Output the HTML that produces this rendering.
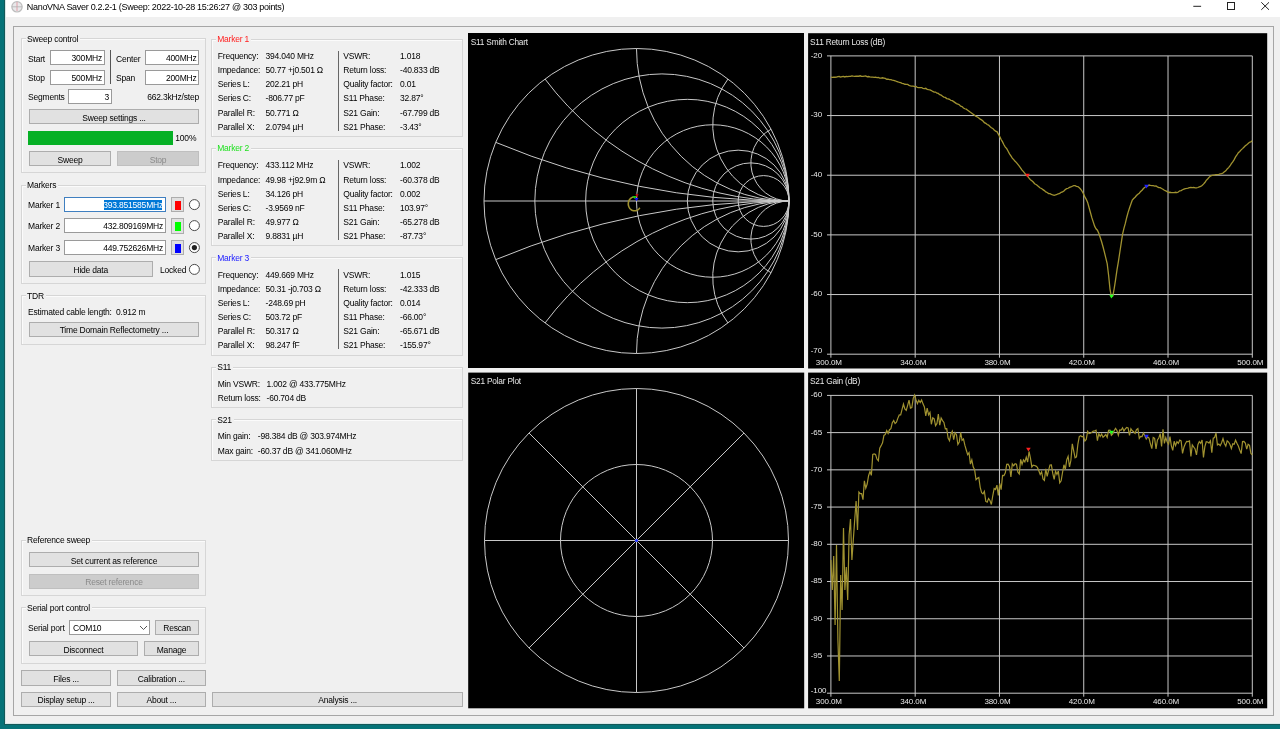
<!DOCTYPE html><html><head><meta charset="utf-8"><style>
html,body{margin:0;padding:0;width:1280px;height:729px;overflow:hidden;background:#057378;}
.r{position:absolute;}
.t{position:absolute;white-space:nowrap;line-height:12px;font-family:"Liberation Sans",sans-serif;}
svg text{font-family:"Liberation Sans",sans-serif;}
#w{position:absolute;left:0;top:0;width:1280px;height:729px;overflow:hidden;filter:blur(0.35px);}
</style></head><body><div id="w">
<div class="r" style="left:0;top:0;width:1280px;height:729px;background:#057378;"></div>
<div class="r" style="left:4.00px;top:0.00px;width:1276.00px;height:725.00px;background:#145858;"></div>
<div class="r" style="left:5.00px;top:0.00px;width:1275.00px;height:724.00px;background:#d4e8e8;"></div>
<div class="r" style="left:6.00px;top:0.00px;width:1274.00px;height:723.00px;background:#f0f0f0;"></div>
<div class="r" style="left:6.00px;top:0.00px;width:1274.00px;height:17.00px;background:#ffffff;"></div>
<svg class="r" style="left:10px;top:0px" width="14" height="14"><circle cx="7" cy="6.8" r="5.2" fill="#e8e8ea" stroke="#bcbcbc" stroke-width="1.2"/><line x1="7" y1="2" x2="7" y2="11" stroke="#e0a0a8" stroke-width="1"/><line x1="2" y1="6.8" x2="12" y2="6.8" stroke="#b0b0b0" stroke-width="0.8"/></svg>
<div class="t" style="left:26.80px;top:0.52px;font-size:9px;letter-spacing:-0.3px;color:#000;">NanoVNA Saver 0.2.2-1 (Sweep: 2022-10-28 15:26:27 @ 303 points)</div>
<svg class="r" style="left:1185px;top:0px" width="95" height="14"><line x1="8.3" y1="6.3" x2="16.1" y2="6.3" stroke="#222" stroke-width="1"/><rect x="42.5" y="2.5" width="7" height="7" fill="none" stroke="#222" stroke-width="1"/><line x1="76.3" y1="2.3" x2="84" y2="9.8" stroke="#222" stroke-width="1"/><line x1="84" y1="2.3" x2="76.3" y2="9.8" stroke="#222" stroke-width="1"/></svg>
<div class="r" style="left:13.00px;top:26.00px;width:1261.00px;height:690.00px;background:transparent;border:1px solid #a6a6a6;box-sizing:border-box;"></div>
<div class="r" style="left:21.00px;top:38.00px;width:185.00px;height:135.00px;background:transparent;border:1px solid #d6d6d6;box-sizing:border-box;box-shadow: inset 1px 1px 0 #fbfbfb;"></div>
<div class="t" style="left:26.00px;top:32.60px;height:12px;background:#f0f0f0;padding:0 2px 0 1px;font-size:8.5px;letter-spacing:-0.2px;color:#000;line-height:12px;">Sweep control</div>
<div class="t" style="left:28.00px;top:52.71px;font-size:8.5px;letter-spacing:-0.2px;color:#000;">Start</div>
<div class="r" style="left:50.30px;top:50.30px;width:54.70px;height:15.00px;background:#fff;border:1px solid #9a9a9a;box-sizing:border-box;"></div>
<div class="t" style="right:1178.00px;top:51.91px;font-size:8.5px;letter-spacing:-0.2px;color:#000;text-align:right;">300MHz</div>
<div class="t" style="left:28.00px;top:71.91px;font-size:8.5px;letter-spacing:-0.2px;color:#000;">Stop</div>
<div class="r" style="left:50.30px;top:70.30px;width:54.70px;height:14.70px;background:#fff;border:1px solid #9a9a9a;box-sizing:border-box;"></div>
<div class="t" style="right:1178.00px;top:71.76px;font-size:8.5px;letter-spacing:-0.2px;color:#000;text-align:right;">500MHz</div>
<div class="r" style="left:110.00px;top:50.00px;width:1.20px;height:34.00px;background:#555;"></div>
<div class="t" style="left:116.00px;top:52.71px;font-size:8.5px;letter-spacing:-0.2px;color:#000;">Center</div>
<div class="r" style="left:145.30px;top:50.30px;width:54.20px;height:15.00px;background:#fff;border:1px solid #9a9a9a;box-sizing:border-box;"></div>
<div class="t" style="right:1083.50px;top:51.91px;font-size:8.5px;letter-spacing:-0.2px;color:#000;text-align:right;">400MHz</div>
<div class="t" style="left:116.00px;top:71.91px;font-size:8.5px;letter-spacing:-0.2px;color:#000;">Span</div>
<div class="r" style="left:145.30px;top:70.30px;width:54.20px;height:14.70px;background:#fff;border:1px solid #9a9a9a;box-sizing:border-box;"></div>
<div class="t" style="right:1083.50px;top:71.76px;font-size:8.5px;letter-spacing:-0.2px;color:#000;text-align:right;">200MHz</div>
<div class="t" style="left:28.00px;top:91.31px;font-size:8.5px;letter-spacing:-0.2px;color:#000;">Segments</div>
<div class="r" style="left:67.80px;top:89.00px;width:44.20px;height:15.00px;background:#fff;border:1px solid #9a9a9a;box-sizing:border-box;"></div>
<div class="t" style="right:1171.00px;top:90.61px;font-size:8.5px;letter-spacing:-0.2px;color:#000;text-align:right;">3</div>
<div class="t" style="right:1081.00px;top:91.31px;font-size:8.5px;letter-spacing:-0.2px;color:#000;text-align:right;">662.3kHz/step</div>
<div class="r" style="left:29.00px;top:109.40px;width:170.00px;height:15.10px;background:#e1e1e1;border:1px solid #adadad;box-sizing:border-box;"></div>
<div class="t" style="left:14.00px;width:200px;top:111.66px;font-size:8.5px;letter-spacing:-0.2px;color:#000;text-align:center;">Sweep settings ...</div>
<div class="r" style="left:28.40px;top:130.50px;width:144.40px;height:14.50px;background:#06b025;"></div>
<div class="t" style="left:175.30px;top:132.11px;font-size:8.5px;letter-spacing:-0.2px;color:#000;">100%</div>
<div class="r" style="left:29.00px;top:151.30px;width:82.00px;height:15.10px;background:#e1e1e1;border:1px solid #adadad;box-sizing:border-box;"></div>
<div class="t" style="left:-30.00px;width:200px;top:153.56px;font-size:8.5px;letter-spacing:-0.2px;color:#000;text-align:center;">Sweep</div>
<div class="r" style="left:117.00px;top:151.30px;width:82.00px;height:15.10px;background:#cccccc;border:1px solid #bfbfbf;box-sizing:border-box;"></div>
<div class="t" style="left:58.00px;width:200px;top:153.56px;font-size:8.5px;letter-spacing:-0.2px;color:#8a8a8a;text-align:center;">Stop</div>
<div class="r" style="left:21.00px;top:184.50px;width:185.00px;height:99.50px;background:transparent;border:1px solid #d6d6d6;box-sizing:border-box;box-shadow: inset 1px 1px 0 #fbfbfb;"></div>
<div class="t" style="left:26.00px;top:179.10px;height:12px;background:#f0f0f0;padding:0 2px 0 1px;font-size:8.5px;letter-spacing:-0.2px;color:#000;line-height:12px;">Markers</div>
<div class="t" style="left:28.00px;top:198.81px;font-size:8.5px;letter-spacing:-0.2px;color:#000;">Marker 1</div>
<div class="r" style="left:64.00px;top:197.00px;width:102.00px;height:15.00px;background:#fff;border:1px solid #3f7fc0;box-sizing:border-box;"></div>
<div class="r" style="left:103.50px;top:200.00px;width:58.80px;height:9.50px;background:#0078d7;"></div>
<div class="t" style="right:1117.00px;top:198.81px;font-size:8.5px;letter-spacing:-0.2px;color:#fff;text-align:right;">393.851585MHz</div>
<div class="r" style="left:171.30px;top:197.20px;width:13.20px;height:15.30px;background:#e1e1e1;border:1px solid #adadad;box-sizing:border-box;"></div>
<div class="r" style="left:174.80px;top:200.60px;width:6.00px;height:9.20px;background:#ff0000;"></div>
<svg class="r" style="left:188px;top:198.20px" width="13" height="13"><circle cx="6.4" cy="6.6" r="5" fill="#fff" stroke="#4a4a4a" stroke-width="1"/></svg>
<div class="t" style="left:28.00px;top:219.91px;font-size:8.5px;letter-spacing:-0.2px;color:#000;">Marker 2</div>
<div class="r" style="left:64.20px;top:218.30px;width:101.80px;height:14.70px;background:#fff;border:1px solid #9a9a9a;box-sizing:border-box;"></div>
<div class="t" style="right:1117.00px;top:219.76px;font-size:8.5px;letter-spacing:-0.2px;color:#000;text-align:right;">432.809169MHz</div>
<div class="r" style="left:171.30px;top:218.30px;width:13.20px;height:15.30px;background:#e1e1e1;border:1px solid #adadad;box-sizing:border-box;"></div>
<div class="r" style="left:174.80px;top:221.70px;width:6.00px;height:9.20px;background:#00ff00;"></div>
<svg class="r" style="left:188px;top:219.30px" width="13" height="13"><circle cx="6.4" cy="6.6" r="5" fill="#fff" stroke="#4a4a4a" stroke-width="1"/></svg>
<div class="t" style="left:28.00px;top:241.81px;font-size:8.5px;letter-spacing:-0.2px;color:#000;">Marker 3</div>
<div class="r" style="left:64.20px;top:240.20px;width:101.80px;height:14.70px;background:#fff;border:1px solid #9a9a9a;box-sizing:border-box;"></div>
<div class="t" style="right:1117.00px;top:241.66px;font-size:8.5px;letter-spacing:-0.2px;color:#000;text-align:right;">449.752626MHz</div>
<div class="r" style="left:171.30px;top:240.20px;width:13.20px;height:15.30px;background:#e1e1e1;border:1px solid #adadad;box-sizing:border-box;"></div>
<div class="r" style="left:174.80px;top:243.60px;width:6.00px;height:9.20px;background:#0000ff;"></div>
<svg class="r" style="left:188px;top:241.20px" width="13" height="13"><circle cx="6.4" cy="6.6" r="5" fill="#fff" stroke="#4a4a4a" stroke-width="1"/><circle cx="6.4" cy="6.6" r="2.6" fill="#222"/></svg>
<div class="r" style="left:29.00px;top:261.30px;width:123.50px;height:15.70px;background:#e1e1e1;border:1px solid #adadad;box-sizing:border-box;"></div>
<div class="t" style="left:-9.25px;width:200px;top:263.86px;font-size:8.5px;letter-spacing:-0.2px;color:#000;text-align:center;">Hide data</div>
<div class="t" style="left:160.00px;top:263.51px;font-size:8.5px;letter-spacing:-0.2px;color:#000;">Locked</div>
<svg class="r" style="left:188px;top:263px" width="13" height="13"><circle cx="6.4" cy="6.4" r="5" fill="#fff" stroke="#4a4a4a" stroke-width="1"/></svg>
<div class="r" style="left:21.00px;top:295.00px;width:185.00px;height:49.50px;background:transparent;border:1px solid #d6d6d6;box-sizing:border-box;box-shadow: inset 1px 1px 0 #fbfbfb;"></div>
<div class="t" style="left:26.00px;top:289.60px;height:12px;background:#f0f0f0;padding:0 2px 0 1px;font-size:8.5px;letter-spacing:-0.2px;color:#000;line-height:12px;">TDR</div>
<div class="t" style="left:28.00px;top:306.11px;font-size:8.5px;letter-spacing:-0.2px;color:#000;">Estimated cable length:&nbsp; 0.912 m</div>
<div class="r" style="left:29.00px;top:322.30px;width:170.00px;height:14.70px;background:#e1e1e1;border:1px solid #adadad;box-sizing:border-box;"></div>
<div class="t" style="left:14.00px;width:200px;top:324.36px;font-size:8.5px;letter-spacing:-0.2px;color:#000;text-align:center;">Time Domain Reflectometry ...</div>
<div class="r" style="left:21.00px;top:539.70px;width:185.00px;height:56.80px;background:transparent;border:1px solid #d6d6d6;box-sizing:border-box;box-shadow: inset 1px 1px 0 #fbfbfb;"></div>
<div class="t" style="left:26.00px;top:534.30px;height:12px;background:#f0f0f0;padding:0 2px 0 1px;font-size:8.5px;letter-spacing:-0.2px;color:#000;line-height:12px;">Reference sweep</div>
<div class="r" style="left:29.00px;top:552.20px;width:170.00px;height:15.30px;background:#e1e1e1;border:1px solid #adadad;box-sizing:border-box;"></div>
<div class="t" style="left:14.00px;width:200px;top:554.56px;font-size:8.5px;letter-spacing:-0.2px;color:#000;text-align:center;">Set current as reference</div>
<div class="r" style="left:29.00px;top:574.00px;width:170.00px;height:15.00px;background:#cccccc;border:1px solid #bfbfbf;box-sizing:border-box;"></div>
<div class="t" style="left:14.00px;width:200px;top:576.21px;font-size:8.5px;letter-spacing:-0.2px;color:#8a8a8a;text-align:center;">Reset reference</div>
<div class="r" style="left:21.00px;top:607.00px;width:185.00px;height:57.00px;background:transparent;border:1px solid #d6d6d6;box-sizing:border-box;box-shadow: inset 1px 1px 0 #fbfbfb;"></div>
<div class="t" style="left:26.00px;top:601.60px;height:12px;background:#f0f0f0;padding:0 2px 0 1px;font-size:8.5px;letter-spacing:-0.2px;color:#000;line-height:12px;">Serial port control</div>
<div class="t" style="left:28.00px;top:622.11px;font-size:8.5px;letter-spacing:-0.2px;color:#000;">Serial port</div>
<div class="r" style="left:69.40px;top:620.20px;width:80.60px;height:14.40px;background:#fff;border:1px solid #9a9a9a;box-sizing:border-box;"></div>
<div class="t" style="left:73.00px;top:621.51px;font-size:8.5px;letter-spacing:-0.2px;color:#000;">COM10</div>
<svg class="r" style="left:138.5px;top:624.3px" width="10" height="8"><polyline points="1,2 4.5,5.5 8,2" fill="none" stroke="#555" stroke-width="1"/></svg>
<div class="r" style="left:155.30px;top:620.20px;width:43.50px;height:14.80px;background:#e1e1e1;border:1px solid #adadad;box-sizing:border-box;"></div>
<div class="t" style="left:77.05px;width:200px;top:622.31px;font-size:8.5px;letter-spacing:-0.2px;color:#000;text-align:center;">Rescan</div>
<div class="r" style="left:29.00px;top:641.30px;width:109.00px;height:15.20px;background:#e1e1e1;border:1px solid #adadad;box-sizing:border-box;"></div>
<div class="t" style="left:-16.50px;width:200px;top:643.61px;font-size:8.5px;letter-spacing:-0.2px;color:#000;text-align:center;">Disconnect</div>
<div class="r" style="left:144.00px;top:641.30px;width:55.00px;height:15.20px;background:#e1e1e1;border:1px solid #adadad;box-sizing:border-box;"></div>
<div class="t" style="left:71.50px;width:200px;top:643.61px;font-size:8.5px;letter-spacing:-0.2px;color:#000;text-align:center;">Manage</div>
<div class="r" style="left:21.30px;top:670.20px;width:89.50px;height:15.60px;background:#e1e1e1;border:1px solid #adadad;box-sizing:border-box;"></div>
<div class="t" style="left:-33.95px;width:200px;top:672.71px;font-size:8.5px;letter-spacing:-0.2px;color:#000;text-align:center;">Files ...</div>
<div class="r" style="left:117.00px;top:670.20px;width:88.80px;height:15.60px;background:#e1e1e1;border:1px solid #adadad;box-sizing:border-box;"></div>
<div class="t" style="left:61.40px;width:200px;top:672.71px;font-size:8.5px;letter-spacing:-0.2px;color:#000;text-align:center;">Calibration ...</div>
<div class="r" style="left:21.30px;top:692.00px;width:89.50px;height:15.20px;background:#e1e1e1;border:1px solid #adadad;box-sizing:border-box;"></div>
<div class="t" style="left:-33.95px;width:200px;top:694.31px;font-size:8.5px;letter-spacing:-0.2px;color:#000;text-align:center;">Display setup ...</div>
<div class="r" style="left:117.00px;top:692.00px;width:88.80px;height:15.20px;background:#e1e1e1;border:1px solid #adadad;box-sizing:border-box;"></div>
<div class="t" style="left:61.40px;width:200px;top:694.31px;font-size:8.5px;letter-spacing:-0.2px;color:#000;text-align:center;">About ...</div>
<div class="r" style="left:212.30px;top:692.00px;width:250.80px;height:15.20px;background:#e1e1e1;border:1px solid #adadad;box-sizing:border-box;"></div>
<div class="t" style="left:237.70px;width:200px;top:694.31px;font-size:8.5px;letter-spacing:-0.2px;color:#000;text-align:center;">Analysis ...</div>
<div class="r" style="left:211.20px;top:38.50px;width:252.30px;height:98.30px;background:transparent;border:1px solid #d6d6d6;box-sizing:border-box;box-shadow: inset 1px 1px 0 #fbfbfb;"></div>
<div class="t" style="left:216.20px;top:33.10px;height:12px;background:#f0f0f0;padding:0 2px 0 1px;font-size:8.5px;letter-spacing:-0.2px;color:#ff2020;line-height:12px;">Marker 1</div>
<div class="t" style="left:217.80px;top:50.11px;font-size:8.5px;letter-spacing:-0.2px;color:#000;">Frequency:</div>
<div class="t" style="left:265.50px;top:50.11px;font-size:8.5px;letter-spacing:-0.2px;color:#000;">394.040 MHz</div>
<div class="t" style="left:343.30px;top:50.11px;font-size:8.5px;letter-spacing:-0.2px;color:#000;">VSWR:</div>
<div class="t" style="left:400.00px;top:50.11px;font-size:8.5px;letter-spacing:-0.2px;color:#000;">1.018</div>
<div class="t" style="left:217.80px;top:64.21px;font-size:8.5px;letter-spacing:-0.2px;color:#000;">Impedance:</div>
<div class="t" style="left:265.50px;top:64.21px;font-size:8.5px;letter-spacing:-0.2px;color:#000;">50.77 +j0.501 &Omega;</div>
<div class="t" style="left:343.30px;top:64.21px;font-size:8.5px;letter-spacing:-0.2px;color:#000;">Return loss:</div>
<div class="t" style="left:400.00px;top:64.21px;font-size:8.5px;letter-spacing:-0.2px;color:#000;">-40.833 dB</div>
<div class="t" style="left:217.80px;top:78.31px;font-size:8.5px;letter-spacing:-0.2px;color:#000;">Series L:</div>
<div class="t" style="left:265.50px;top:78.31px;font-size:8.5px;letter-spacing:-0.2px;color:#000;">202.21 pH</div>
<div class="t" style="left:343.30px;top:78.31px;font-size:8.5px;letter-spacing:-0.2px;color:#000;">Quality factor:</div>
<div class="t" style="left:400.00px;top:78.31px;font-size:8.5px;letter-spacing:-0.2px;color:#000;">0.01</div>
<div class="t" style="left:217.80px;top:92.41px;font-size:8.5px;letter-spacing:-0.2px;color:#000;">Series C:</div>
<div class="t" style="left:265.50px;top:92.41px;font-size:8.5px;letter-spacing:-0.2px;color:#000;">-806.77 pF</div>
<div class="t" style="left:343.30px;top:92.41px;font-size:8.5px;letter-spacing:-0.2px;color:#000;">S11 Phase:</div>
<div class="t" style="left:400.00px;top:92.41px;font-size:8.5px;letter-spacing:-0.2px;color:#000;">32.87&deg;</div>
<div class="t" style="left:217.80px;top:106.51px;font-size:8.5px;letter-spacing:-0.2px;color:#000;">Parallel R:</div>
<div class="t" style="left:265.50px;top:106.51px;font-size:8.5px;letter-spacing:-0.2px;color:#000;">50.771 &Omega;</div>
<div class="t" style="left:343.30px;top:106.51px;font-size:8.5px;letter-spacing:-0.2px;color:#000;">S21 Gain:</div>
<div class="t" style="left:400.00px;top:106.51px;font-size:8.5px;letter-spacing:-0.2px;color:#000;">-67.799 dB</div>
<div class="t" style="left:217.80px;top:120.61px;font-size:8.5px;letter-spacing:-0.2px;color:#000;">Parallel X:</div>
<div class="t" style="left:265.50px;top:120.61px;font-size:8.5px;letter-spacing:-0.2px;color:#000;">2.0794 &micro;H</div>
<div class="t" style="left:343.30px;top:120.61px;font-size:8.5px;letter-spacing:-0.2px;color:#000;">S21 Phase:</div>
<div class="t" style="left:400.00px;top:120.61px;font-size:8.5px;letter-spacing:-0.2px;color:#000;">-3.43&deg;</div>
<div class="r" style="left:337.50px;top:50.90px;width:1.20px;height:79.70px;background:#666;"></div>
<div class="r" style="left:211.20px;top:147.80px;width:252.30px;height:98.60px;background:transparent;border:1px solid #d6d6d6;box-sizing:border-box;box-shadow: inset 1px 1px 0 #fbfbfb;"></div>
<div class="t" style="left:216.20px;top:142.40px;height:12px;background:#f0f0f0;padding:0 2px 0 1px;font-size:8.5px;letter-spacing:-0.2px;color:#20e020;line-height:12px;">Marker 2</div>
<div class="t" style="left:217.80px;top:159.41px;font-size:8.5px;letter-spacing:-0.2px;color:#000;">Frequency:</div>
<div class="t" style="left:265.50px;top:159.41px;font-size:8.5px;letter-spacing:-0.2px;color:#000;">433.112 MHz</div>
<div class="t" style="left:343.30px;top:159.41px;font-size:8.5px;letter-spacing:-0.2px;color:#000;">VSWR:</div>
<div class="t" style="left:400.00px;top:159.41px;font-size:8.5px;letter-spacing:-0.2px;color:#000;">1.002</div>
<div class="t" style="left:217.80px;top:173.51px;font-size:8.5px;letter-spacing:-0.2px;color:#000;">Impedance:</div>
<div class="t" style="left:265.50px;top:173.51px;font-size:8.5px;letter-spacing:-0.2px;color:#000;">49.98 +j92.9m &Omega;</div>
<div class="t" style="left:343.30px;top:173.51px;font-size:8.5px;letter-spacing:-0.2px;color:#000;">Return loss:</div>
<div class="t" style="left:400.00px;top:173.51px;font-size:8.5px;letter-spacing:-0.2px;color:#000;">-60.378 dB</div>
<div class="t" style="left:217.80px;top:187.61px;font-size:8.5px;letter-spacing:-0.2px;color:#000;">Series L:</div>
<div class="t" style="left:265.50px;top:187.61px;font-size:8.5px;letter-spacing:-0.2px;color:#000;">34.126 pH</div>
<div class="t" style="left:343.30px;top:187.61px;font-size:8.5px;letter-spacing:-0.2px;color:#000;">Quality factor:</div>
<div class="t" style="left:400.00px;top:187.61px;font-size:8.5px;letter-spacing:-0.2px;color:#000;">0.002</div>
<div class="t" style="left:217.80px;top:201.71px;font-size:8.5px;letter-spacing:-0.2px;color:#000;">Series C:</div>
<div class="t" style="left:265.50px;top:201.71px;font-size:8.5px;letter-spacing:-0.2px;color:#000;">-3.9569 nF</div>
<div class="t" style="left:343.30px;top:201.71px;font-size:8.5px;letter-spacing:-0.2px;color:#000;">S11 Phase:</div>
<div class="t" style="left:400.00px;top:201.71px;font-size:8.5px;letter-spacing:-0.2px;color:#000;">103.97&deg;</div>
<div class="t" style="left:217.80px;top:215.81px;font-size:8.5px;letter-spacing:-0.2px;color:#000;">Parallel R:</div>
<div class="t" style="left:265.50px;top:215.81px;font-size:8.5px;letter-spacing:-0.2px;color:#000;">49.977 &Omega;</div>
<div class="t" style="left:343.30px;top:215.81px;font-size:8.5px;letter-spacing:-0.2px;color:#000;">S21 Gain:</div>
<div class="t" style="left:400.00px;top:215.81px;font-size:8.5px;letter-spacing:-0.2px;color:#000;">-65.278 dB</div>
<div class="t" style="left:217.80px;top:229.91px;font-size:8.5px;letter-spacing:-0.2px;color:#000;">Parallel X:</div>
<div class="t" style="left:265.50px;top:229.91px;font-size:8.5px;letter-spacing:-0.2px;color:#000;">9.8831 &micro;H</div>
<div class="t" style="left:343.30px;top:229.91px;font-size:8.5px;letter-spacing:-0.2px;color:#000;">S21 Phase:</div>
<div class="t" style="left:400.00px;top:229.91px;font-size:8.5px;letter-spacing:-0.2px;color:#000;">-87.73&deg;</div>
<div class="r" style="left:337.50px;top:160.20px;width:1.20px;height:79.70px;background:#666;"></div>
<div class="r" style="left:211.20px;top:257.00px;width:252.30px;height:98.80px;background:transparent;border:1px solid #d6d6d6;box-sizing:border-box;box-shadow: inset 1px 1px 0 #fbfbfb;"></div>
<div class="t" style="left:216.20px;top:251.60px;height:12px;background:#f0f0f0;padding:0 2px 0 1px;font-size:8.5px;letter-spacing:-0.2px;color:#2020ff;line-height:12px;">Marker 3</div>
<div class="t" style="left:217.80px;top:268.61px;font-size:8.5px;letter-spacing:-0.2px;color:#000;">Frequency:</div>
<div class="t" style="left:265.50px;top:268.61px;font-size:8.5px;letter-spacing:-0.2px;color:#000;">449.669 MHz</div>
<div class="t" style="left:343.30px;top:268.61px;font-size:8.5px;letter-spacing:-0.2px;color:#000;">VSWR:</div>
<div class="t" style="left:400.00px;top:268.61px;font-size:8.5px;letter-spacing:-0.2px;color:#000;">1.015</div>
<div class="t" style="left:217.80px;top:282.71px;font-size:8.5px;letter-spacing:-0.2px;color:#000;">Impedance:</div>
<div class="t" style="left:265.50px;top:282.71px;font-size:8.5px;letter-spacing:-0.2px;color:#000;">50.31 -j0.703 &Omega;</div>
<div class="t" style="left:343.30px;top:282.71px;font-size:8.5px;letter-spacing:-0.2px;color:#000;">Return loss:</div>
<div class="t" style="left:400.00px;top:282.71px;font-size:8.5px;letter-spacing:-0.2px;color:#000;">-42.333 dB</div>
<div class="t" style="left:217.80px;top:296.81px;font-size:8.5px;letter-spacing:-0.2px;color:#000;">Series L:</div>
<div class="t" style="left:265.50px;top:296.81px;font-size:8.5px;letter-spacing:-0.2px;color:#000;">-248.69 pH</div>
<div class="t" style="left:343.30px;top:296.81px;font-size:8.5px;letter-spacing:-0.2px;color:#000;">Quality factor:</div>
<div class="t" style="left:400.00px;top:296.81px;font-size:8.5px;letter-spacing:-0.2px;color:#000;">0.014</div>
<div class="t" style="left:217.80px;top:310.91px;font-size:8.5px;letter-spacing:-0.2px;color:#000;">Series C:</div>
<div class="t" style="left:265.50px;top:310.91px;font-size:8.5px;letter-spacing:-0.2px;color:#000;">503.72 pF</div>
<div class="t" style="left:343.30px;top:310.91px;font-size:8.5px;letter-spacing:-0.2px;color:#000;">S11 Phase:</div>
<div class="t" style="left:400.00px;top:310.91px;font-size:8.5px;letter-spacing:-0.2px;color:#000;">-66.00&deg;</div>
<div class="t" style="left:217.80px;top:325.01px;font-size:8.5px;letter-spacing:-0.2px;color:#000;">Parallel R:</div>
<div class="t" style="left:265.50px;top:325.01px;font-size:8.5px;letter-spacing:-0.2px;color:#000;">50.317 &Omega;</div>
<div class="t" style="left:343.30px;top:325.01px;font-size:8.5px;letter-spacing:-0.2px;color:#000;">S21 Gain:</div>
<div class="t" style="left:400.00px;top:325.01px;font-size:8.5px;letter-spacing:-0.2px;color:#000;">-65.671 dB</div>
<div class="t" style="left:217.80px;top:339.11px;font-size:8.5px;letter-spacing:-0.2px;color:#000;">Parallel X:</div>
<div class="t" style="left:265.50px;top:339.11px;font-size:8.5px;letter-spacing:-0.2px;color:#000;">98.247 fF</div>
<div class="t" style="left:343.30px;top:339.11px;font-size:8.5px;letter-spacing:-0.2px;color:#000;">S21 Phase:</div>
<div class="t" style="left:400.00px;top:339.11px;font-size:8.5px;letter-spacing:-0.2px;color:#000;">-155.97&deg;</div>
<div class="r" style="left:337.50px;top:269.40px;width:1.20px;height:79.70px;background:#666;"></div>
<div class="r" style="left:211.20px;top:366.60px;width:252.30px;height:41.80px;background:transparent;border:1px solid #d6d6d6;box-sizing:border-box;box-shadow: inset 1px 1px 0 #fbfbfb;"></div>
<div class="t" style="left:216.20px;top:361.20px;height:12px;background:#f0f0f0;padding:0 2px 0 1px;font-size:8.5px;letter-spacing:-0.2px;color:#000;line-height:12px;">S11</div>
<div class="t" style="left:217.80px;top:377.61px;font-size:8.5px;letter-spacing:-0.2px;color:#000;">Min VSWR:</div>
<div class="t" style="left:266.50px;top:377.61px;font-size:8.5px;letter-spacing:-0.2px;color:#000;">1.002 @ 433.775MHz</div>
<div class="t" style="left:217.80px;top:391.71px;font-size:8.5px;letter-spacing:-0.2px;color:#000;">Return loss:</div>
<div class="t" style="left:266.50px;top:391.71px;font-size:8.5px;letter-spacing:-0.2px;color:#000;">-60.704 dB</div>
<div class="r" style="left:211.20px;top:419.00px;width:252.30px;height:41.80px;background:transparent;border:1px solid #d6d6d6;box-sizing:border-box;box-shadow: inset 1px 1px 0 #fbfbfb;"></div>
<div class="t" style="left:216.20px;top:413.60px;height:12px;background:#f0f0f0;padding:0 2px 0 1px;font-size:8.5px;letter-spacing:-0.2px;color:#000;line-height:12px;">S21</div>
<div class="t" style="left:217.80px;top:430.11px;font-size:8.5px;letter-spacing:-0.2px;color:#000;">Min gain:</div>
<div class="t" style="left:257.80px;top:430.11px;font-size:8.5px;letter-spacing:-0.2px;color:#000;">-98.384 dB @ 303.974MHz</div>
<div class="t" style="left:217.80px;top:444.51px;font-size:8.5px;letter-spacing:-0.2px;color:#000;">Max gain:</div>
<div class="t" style="left:257.80px;top:444.51px;font-size:8.5px;letter-spacing:-0.2px;color:#000;">-60.37 dB @ 341.060MHz</div>
<div class="r" style="left:468.20px;top:33.20px;width:336.00px;height:335.30px;background:#000;"></div>
<div class="t" style="left:470.70px;top:35.91px;font-size:8.3px;letter-spacing:-0.2px;color:#e8e8e8;">S11 Smith Chart</div>
<svg class="r" style="left:0;top:0" width="1280" height="729" viewBox="0 0 1280 729">
<circle cx="636.5" cy="201.0" r="152.5" fill="none" stroke="#c8c8c8" stroke-width="1"/>
<line x1="484.0" y1="201.0" x2="789.0" y2="201.0" fill="none" stroke="#c8c8c8" stroke-width="1"/>
<circle cx="712.75" cy="201.0" r="76.25" fill="none" stroke="#c8c8c8" stroke-width="1"/>
<circle cx="738.17" cy="201.0" r="50.83" fill="none" stroke="#c8c8c8" stroke-width="1"/>
<circle cx="750.88" cy="201.0" r="38.12" fill="none" stroke="#c8c8c8" stroke-width="1"/>
<circle cx="763.58" cy="201.0" r="25.42" fill="none" stroke="#c8c8c8" stroke-width="1"/>
<circle cx="687.33" cy="201.0" r="101.67" fill="none" stroke="#c8c8c8" stroke-width="1"/>
<circle cx="661.92" cy="201.0" r="127.08" fill="none" stroke="#c8c8c8" stroke-width="1"/>
<path d="M789.00,201.0 A38.12,38.12 0 0 1 771.06,129.24" fill="none" stroke="#c8c8c8" stroke-width="1"/>
<path d="M789.00,201.0 A38.12,38.12 0 0 0 771.06,272.76" fill="none" stroke="#c8c8c8" stroke-width="1"/>
<path d="M789.00,201.0 A76.25,76.25 0 0 1 728.00,79.00" fill="none" stroke="#c8c8c8" stroke-width="1"/>
<path d="M789.00,201.0 A76.25,76.25 0 0 0 728.00,323.00" fill="none" stroke="#c8c8c8" stroke-width="1"/>
<path d="M789.00,201.0 A152.50,152.50 0 0 1 636.50,48.50" fill="none" stroke="#c8c8c8" stroke-width="1"/>
<path d="M789.00,201.0 A152.50,152.50 0 0 0 636.50,353.50" fill="none" stroke="#c8c8c8" stroke-width="1"/>
<path d="M789.00,201.0 A305.00,305.00 0 0 1 545.00,79.00" fill="none" stroke="#c8c8c8" stroke-width="1"/>
<path d="M789.00,201.0 A305.00,305.00 0 0 0 545.00,323.00" fill="none" stroke="#c8c8c8" stroke-width="1"/>
<path d="M789.00,201.0 A762.50,762.50 0 0 1 495.73,142.35" fill="none" stroke="#c8c8c8" stroke-width="1"/>
<path d="M789.00,201.0 A762.50,762.50 0 0 0 495.73,259.65" fill="none" stroke="#c8c8c8" stroke-width="1"/>
<polyline points="639.76,207.82 639.49,208.22 639.18,208.60 638.86,208.96 638.51,209.29 638.14,209.59 637.76,209.86 637.36,210.10 636.94,210.30 636.51,210.47 636.07,210.61 635.62,210.71 635.17,210.77 634.71,210.80 634.26,210.79 633.80,210.74 633.35,210.66 632.91,210.54 632.47,210.39 632.05,210.20 631.64,209.98 631.24,209.72 630.87,209.44 630.51,209.12 630.17,208.78 629.86,208.41 629.57,208.02 629.31,207.60 629.08,207.16 628.87,206.71 628.70,206.24 628.55,205.76 628.44,205.27 628.36,204.77 628.31,204.27 628.30,203.76 628.32,203.25 628.37,202.75 628.46,202.25 628.57,201.76 628.72,201.28 628.90,200.81 629.11,200.36 629.35,199.93 629.62,199.52 629.91,199.13 630.22,198.76 630.56,198.42 630.93,198.11 631.31,197.83 631.70,197.58 632.12,197.37 632.54,197.18 632.98,197.04 633.42,196.92 633.87,196.85 634.33,196.81 634.79,196.80 635.24,196.84 635.69,196.91" fill="none" stroke="#a09230" stroke-width="1.6"/>
<polygon points="635.3,194.2 638.7,194.2 637,197.4" fill="#c00000"/>
<polygon points="632.5,196 636.5,196 634.5,199" fill="#10d010"/>
<polygon points="634.5,198 638.5,198 636.5,201.2" fill="#1010ff"/>
<rect x="468.2" y="372.6" width="336.00000000000006" height="335.69999999999993" fill="#000"/>
<circle cx="636.5" cy="540.5" r="152" fill="none" stroke="#c8c8c8" stroke-width="1"/>
<circle cx="636.5" cy="540.5" r="76.0" fill="none" stroke="#c8c8c8" stroke-width="1"/>
<line x1="484.5" y1="540.5" x2="788.5" y2="540.5" fill="none" stroke="#c8c8c8" stroke-width="1"/>
<line x1="636.5" y1="388.5" x2="636.5" y2="692.5" fill="none" stroke="#c8c8c8" stroke-width="1"/>
<line x1="529.02" y1="433.02" x2="743.98" y2="647.98" fill="none" stroke="#c8c8c8" stroke-width="1"/>
<line x1="529.02" y1="647.98" x2="743.98" y2="433.02" fill="none" stroke="#c8c8c8" stroke-width="1"/>
<circle cx="636.5" cy="540.5" r="1.6" fill="#2030ff"/>
<rect x="808.1" y="33.2" width="459.1" height="335.3" fill="#000"/>
<rect x="808.1" y="372.6" width="459.1" height="335.69999999999993" fill="#000"/>
<line x1="827" y1="55.90" x2="1252.3" y2="55.90" fill="none" stroke="#c8c8c8" stroke-width="1"/>
<line x1="827" y1="115.56" x2="1252.3" y2="115.56" fill="none" stroke="#c8c8c8" stroke-width="1"/>
<line x1="827" y1="175.22" x2="1252.3" y2="175.22" fill="none" stroke="#c8c8c8" stroke-width="1"/>
<line x1="827" y1="234.88" x2="1252.3" y2="234.88" fill="none" stroke="#c8c8c8" stroke-width="1"/>
<line x1="827" y1="294.54" x2="1252.3" y2="294.54" fill="none" stroke="#c8c8c8" stroke-width="1"/>
<line x1="827" y1="354.20" x2="1252.3" y2="354.20" fill="none" stroke="#c8c8c8" stroke-width="1"/>
<line x1="830.90" y1="55.9" x2="830.90" y2="357.70" fill="none" stroke="#c8c8c8" stroke-width="1"/>
<line x1="915.18" y1="55.9" x2="915.18" y2="357.70" fill="none" stroke="#c8c8c8" stroke-width="1"/>
<line x1="999.46" y1="55.9" x2="999.46" y2="357.70" fill="none" stroke="#c8c8c8" stroke-width="1"/>
<line x1="1083.74" y1="55.9" x2="1083.74" y2="357.70" fill="none" stroke="#c8c8c8" stroke-width="1"/>
<line x1="1168.02" y1="55.9" x2="1168.02" y2="357.70" fill="none" stroke="#c8c8c8" stroke-width="1"/>
<line x1="1252.30" y1="55.9" x2="1252.30" y2="357.70" fill="none" stroke="#c8c8c8" stroke-width="1"/>
<line x1="827" y1="395.40" x2="1252.3" y2="395.40" fill="none" stroke="#c8c8c8" stroke-width="1"/>
<line x1="827" y1="432.62" x2="1252.3" y2="432.62" fill="none" stroke="#c8c8c8" stroke-width="1"/>
<line x1="827" y1="469.85" x2="1252.3" y2="469.85" fill="none" stroke="#c8c8c8" stroke-width="1"/>
<line x1="827" y1="507.07" x2="1252.3" y2="507.07" fill="none" stroke="#c8c8c8" stroke-width="1"/>
<line x1="827" y1="544.30" x2="1252.3" y2="544.30" fill="none" stroke="#c8c8c8" stroke-width="1"/>
<line x1="827" y1="581.53" x2="1252.3" y2="581.53" fill="none" stroke="#c8c8c8" stroke-width="1"/>
<line x1="827" y1="618.75" x2="1252.3" y2="618.75" fill="none" stroke="#c8c8c8" stroke-width="1"/>
<line x1="827" y1="655.98" x2="1252.3" y2="655.98" fill="none" stroke="#c8c8c8" stroke-width="1"/>
<line x1="827" y1="693.20" x2="1252.3" y2="693.20" fill="none" stroke="#c8c8c8" stroke-width="1"/>
<line x1="830.90" y1="395.4" x2="830.90" y2="696.70" fill="none" stroke="#c8c8c8" stroke-width="1"/>
<line x1="915.18" y1="395.4" x2="915.18" y2="696.70" fill="none" stroke="#c8c8c8" stroke-width="1"/>
<line x1="999.46" y1="395.4" x2="999.46" y2="696.70" fill="none" stroke="#c8c8c8" stroke-width="1"/>
<line x1="1083.74" y1="395.4" x2="1083.74" y2="696.70" fill="none" stroke="#c8c8c8" stroke-width="1"/>
<line x1="1168.02" y1="395.4" x2="1168.02" y2="696.70" fill="none" stroke="#c8c8c8" stroke-width="1"/>
<line x1="1252.30" y1="395.4" x2="1252.30" y2="696.70" fill="none" stroke="#c8c8c8" stroke-width="1"/>
<polyline points="830.90,77.09 832.30,77.30 833.69,77.11 835.09,77.23 836.48,77.18 837.88,76.65 839.27,76.53 840.67,77.09 842.06,76.54 843.46,76.43 844.85,76.94 846.25,76.43 847.64,76.64 849.04,76.28 850.44,76.34 851.83,75.89 853.23,76.23 854.62,76.38 856.02,76.09 857.41,76.26 858.81,76.23 860.20,75.78 861.60,76.38 862.99,76.30 864.39,76.13 865.78,75.99 867.18,76.74 868.57,76.51 869.97,76.81 871.37,77.05 872.76,77.04 874.16,77.35 875.55,77.07 876.95,77.56 878.34,77.45 879.74,78.03 881.13,78.19 882.53,77.79 883.92,78.05 885.32,78.37 886.71,79.23 888.11,79.08 889.51,79.54 890.90,79.61 892.30,80.13 893.69,80.40 895.09,80.77 896.48,81.36 897.88,81.78 899.27,82.46 900.67,82.71 902.06,83.34 903.46,83.71 904.85,84.25 906.25,84.41 907.65,84.41 909.04,85.36 910.44,85.82 911.83,86.12 913.23,86.18 914.62,86.60 916.02,86.48 917.41,87.48 918.81,87.60 920.20,87.57 921.60,87.55 922.99,88.33 924.39,88.64 925.78,88.25 927.18,89.31 928.58,89.68 929.97,89.92 931.37,90.54 932.76,91.46 934.16,92.13 935.55,92.09 936.95,93.20 938.34,93.42 939.74,94.67 941.13,95.08 942.53,96.25 943.92,97.08 945.32,97.44 946.72,98.59 948.11,98.78 949.51,99.33 950.90,100.48 952.30,100.73 953.69,101.62 955.09,102.62 956.48,103.61 957.88,104.05 959.27,104.77 960.67,106.24 962.06,106.61 963.46,107.95 964.85,108.75 966.25,109.21 967.65,110.17 969.04,111.16 970.44,112.24 971.83,113.23 973.23,114.22 974.62,115.17 976.02,116.37 977.41,117.00 978.81,117.94 980.20,119.20 981.60,119.87 982.99,120.99 984.39,122.61 985.79,123.34 987.18,124.46 988.58,125.14 989.97,126.56 991.37,127.79 992.76,128.43 994.16,129.99 995.55,131.06 996.95,131.64 998.34,134.06 999.74,136.60 1001.13,139.47 1002.53,141.87 1003.93,144.71 1005.32,147.12 1006.72,148.68 1008.11,151.26 1009.51,153.86 1010.90,155.89 1012.30,158.09 1013.69,159.58 1015.09,161.20 1016.48,162.62 1017.88,164.41 1019.27,166.19 1020.67,168.07 1022.06,170.08 1023.46,171.63 1024.86,173.38 1026.25,175.25 1027.65,176.15 1029.04,178.16 1030.44,179.76 1031.83,180.80 1033.23,182.03 1034.62,183.73 1036.02,184.46 1037.41,185.55 1038.81,186.86 1040.20,188.03 1041.60,188.49 1043.00,189.63 1044.39,190.60 1045.79,191.93 1047.18,192.48 1048.58,193.60 1049.97,193.72 1051.37,194.38 1052.76,194.98 1054.16,195.31 1055.55,194.88 1056.95,194.37 1058.34,193.75 1059.74,193.39 1061.14,192.30 1062.53,191.89 1063.93,190.97 1065.32,189.50 1066.72,188.66 1068.11,188.26 1069.51,187.41 1070.90,186.98 1072.30,186.23 1073.69,185.64 1075.09,185.67 1076.48,186.32 1077.88,186.54 1079.27,187.66 1080.67,189.23 1082.07,191.25 1083.46,193.68 1084.86,196.88 1086.25,199.31 1087.65,202.43 1089.04,207.54 1090.44,212.46 1091.83,217.63 1093.23,221.84 1094.62,226.14 1096.02,228.79 1097.41,230.20 1098.81,233.35 1100.21,237.52 1101.60,241.79 1103.00,246.76 1104.39,252.10 1105.79,257.88 1107.18,263.51 1108.58,275.04 1109.97,288.79 1111.37,296.81 1112.76,296.15 1114.16,288.77 1115.55,279.90 1116.95,270.16 1118.35,261.85 1119.74,252.76 1121.14,243.56 1122.53,234.48 1123.93,228.30 1125.32,223.38 1126.72,217.46 1128.11,212.40 1129.51,208.06 1130.90,204.08 1132.30,200.01 1133.69,198.46 1135.09,197.27 1136.48,195.51 1137.88,194.17 1139.28,193.24 1140.67,191.44 1142.07,190.21 1143.46,188.49 1144.86,187.17 1146.25,186.50 1147.65,186.04 1149.04,185.07 1150.44,185.39 1151.83,185.54 1153.23,185.69 1154.62,186.11 1156.02,185.90 1157.42,186.82 1158.81,187.57 1160.21,187.59 1161.60,188.51 1163.00,189.28 1164.39,190.26 1165.79,190.92 1167.18,191.64 1168.58,192.46 1169.97,192.28 1171.37,192.59 1172.76,192.71 1174.16,192.59 1175.55,192.27 1176.95,192.59 1178.35,191.99 1179.74,190.80 1181.14,190.53 1182.53,189.76 1183.93,189.17 1185.32,188.66 1186.72,188.45 1188.11,188.07 1189.51,187.64 1190.90,187.41 1192.30,187.53 1193.69,187.42 1195.09,187.82 1196.49,187.92 1197.88,187.51 1199.28,186.94 1200.67,186.44 1202.07,185.45 1203.46,184.11 1204.86,182.51 1206.25,180.38 1207.65,178.98 1209.04,177.33 1210.44,176.07 1211.83,175.37 1213.23,175.04 1214.63,174.94 1216.02,174.55 1217.42,174.64 1218.81,174.29 1220.21,173.87 1221.60,173.66 1223.00,173.00 1224.39,171.69 1225.79,170.81 1227.18,168.97 1228.58,167.62 1229.97,165.97 1231.37,163.58 1232.76,161.88 1234.16,159.59 1235.56,156.95 1236.95,154.98 1238.35,152.73 1239.74,151.54 1241.14,149.89 1242.53,148.62 1243.93,147.18 1245.32,145.81 1246.72,144.69 1248.11,143.50 1249.51,142.21 1250.90,141.81 1252.30,140.70" fill="none" stroke="#a09230" stroke-width="1.3"/>
<polygon points="1025.20,173.80 1029.80,173.80 1027.50,177.50" fill="#ff2020"/>
<polygon points="1109.20,294.80 1113.80,294.80 1111.50,298.50" fill="#20ff20"/>
<polygon points="1144.20,184.80 1148.80,184.80 1146.50,188.50" fill="#2020ff"/>
<polyline points="830.90,560.00 832.30,590.00 833.70,556.00 835.10,625.00 836.50,545.00 837.90,640.00 839.30,681.00 840.70,575.00 842.10,610.00 843.50,528.00 844.90,590.00 846.30,567.00 847.70,600.00 849.10,535.00 850.50,519.00 851.90,560.00 853.30,540.00 854.70,520.00 856.10,501.00 857.50,530.00 858.90,492.00 860.20,493.56 861.60,493.58 862.99,499.71 864.39,480.84 865.78,488.15 867.18,484.02 868.57,475.72 869.97,471.50 871.37,475.37 872.76,454.45 874.16,453.96 875.55,454.37 876.95,459.06 878.34,460.78 879.74,448.16 881.13,445.66 882.53,442.88 883.92,435.40 885.32,434.48 886.71,430.53 888.11,433.38 889.51,429.71 890.90,428.64 892.30,422.68 893.69,420.58 895.09,423.53 896.48,422.08 897.88,418.10 899.27,414.91 900.67,414.98 902.06,409.42 903.46,404.08 904.85,408.86 906.25,410.37 907.65,405.34 909.04,400.10 910.44,408.07 911.83,407.50 913.23,398.32 914.62,395.06 916.02,399.91 917.41,403.57 918.81,400.28 920.20,402.60 921.60,400.01 922.99,403.84 924.39,407.02 925.78,415.96 927.18,408.22 928.58,414.84 929.97,412.45 931.37,424.30 932.76,417.74 934.16,418.94 935.55,425.69 936.95,423.43 938.34,414.19 939.74,425.10 941.13,417.98 942.53,420.61 943.92,422.46 945.32,428.86 946.72,428.67 948.11,438.00 949.51,440.79 950.90,434.04 952.30,431.12 953.69,439.70 955.09,432.77 956.48,434.72 957.88,444.50 959.27,441.96 960.67,432.26 962.06,440.36 963.46,438.96 964.85,445.22 966.25,449.98 967.65,454.68 969.04,452.61 970.44,464.06 971.83,459.83 973.23,467.09 974.62,469.80 976.02,479.73 977.41,478.31 978.81,477.49 980.20,487.32 981.60,492.60 982.99,493.90 984.39,491.41 985.79,501.43 987.18,502.21 988.58,498.59 989.97,500.49 991.37,504.51 992.76,495.78 994.16,488.51 995.55,489.45 996.95,485.11 998.34,495.35 999.74,483.47 1001.13,489.66 1002.53,475.45 1003.93,475.61 1005.32,472.78 1006.72,464.41 1008.11,464.23 1009.51,466.66 1010.90,476.99 1012.30,463.86 1013.69,465.82 1015.09,463.79 1016.48,464.19 1017.88,472.33 1019.27,473.95 1020.67,459.35 1022.06,464.36 1023.46,459.92 1024.86,461.85 1026.25,457.12 1027.65,462.00 1029.04,451.50 1030.44,458.00 1031.83,466.94 1033.23,465.17 1034.62,465.46 1036.02,466.08 1037.41,467.41 1038.81,470.79 1040.20,474.42 1041.60,471.74 1043.00,478.86 1044.39,480.32 1045.79,468.94 1047.18,476.33 1048.58,470.33 1049.97,465.01 1051.37,464.90 1052.76,473.41 1054.16,479.41 1055.55,471.10 1056.95,474.49 1058.34,470.99 1059.74,482.90 1061.14,480.87 1062.53,472.52 1063.93,464.76 1065.32,469.46 1066.72,459.87 1068.11,456.44 1069.51,466.96 1070.90,460.26 1072.30,443.88 1073.69,450.93 1075.09,457.73 1076.48,456.81 1077.88,444.24 1079.27,436.59 1080.67,435.79 1082.07,436.84 1083.46,436.33 1084.86,440.96 1086.25,439.39 1087.65,431.42 1089.04,433.53 1090.44,433.27 1091.83,432.36 1093.23,431.13 1094.62,431.03 1096.02,430.21 1097.41,440.63 1098.81,433.72 1100.21,436.45 1101.60,434.05 1103.00,437.18 1104.39,435.98 1105.79,434.48 1107.18,437.37 1108.58,430.28 1109.97,430.07 1111.37,435.32 1112.76,433.96 1114.16,430.77 1115.55,428.32 1116.95,430.50 1118.35,435.25 1119.74,429.94 1121.14,430.19 1122.53,427.85 1123.93,431.00 1125.32,428.96 1126.72,427.48 1128.11,427.96 1129.51,435.30 1130.90,428.79 1132.30,430.82 1133.69,431.73 1135.09,433.33 1136.48,429.58 1137.88,428.53 1139.28,438.44 1140.67,436.34 1142.07,436.55 1143.46,432.94 1144.86,435.66 1146.25,439.05 1147.65,436.99 1149.04,438.14 1150.44,443.84 1151.83,448.59 1153.23,437.43 1154.62,438.31 1156.02,448.94 1157.42,439.95 1158.81,438.04 1160.21,433.58 1161.60,446.38 1163.00,429.34 1164.39,443.38 1165.79,437.69 1167.18,442.02 1168.58,444.14 1169.97,436.69 1171.37,445.82 1172.76,450.41 1174.16,441.30 1175.55,445.60 1176.95,441.65 1178.35,443.43 1179.74,440.02 1181.14,440.89 1182.53,453.46 1183.93,447.26 1185.32,443.66 1186.72,441.38 1188.11,441.52 1189.51,440.97 1190.90,456.52 1192.30,444.90 1193.69,446.97 1195.09,449.02 1196.49,454.81 1197.88,444.68 1199.28,441.59 1200.67,443.32 1202.07,440.10 1203.46,457.45 1204.86,446.63 1206.25,441.76 1207.65,442.03 1209.04,443.17 1210.44,440.77 1211.83,452.72 1213.23,438.13 1214.63,437.51 1216.02,432.92 1217.42,444.93 1218.81,443.99 1220.21,445.67 1221.60,442.78 1223.00,438.59 1224.39,443.41 1225.79,446.10 1227.18,440.79 1228.58,442.06 1229.97,444.49 1231.37,448.55 1232.76,443.82 1234.16,444.24 1235.56,440.17 1236.95,443.23 1238.35,446.05 1239.74,450.03 1241.14,453.60 1242.53,441.63 1243.93,441.50 1245.32,443.04 1246.72,449.21 1248.11,444.35 1249.51,445.36 1250.90,453.35 1252.30,454.77" fill="none" stroke="#a09230" stroke-width="1.2"/>
<polygon points="1026.10,447.80 1030.70,447.80 1028.40,451.50" fill="#ff2020"/>
<polygon points="1109.20,430.80 1113.80,430.80 1111.50,434.50" fill="#20ff20"/>
<polygon points="1144.20,434.80 1148.80,434.80 1146.50,438.50" fill="#2020ff"/></svg>
<div class="t" style="left:810.00px;top:35.91px;font-size:8.3px;letter-spacing:-0.2px;color:#e8e8e8;">S11 Return Loss (dB)</div>
<div class="t" style="left:810.00px;top:375.11px;font-size:8.3px;letter-spacing:-0.2px;color:#e8e8e8;">S21 Gain (dB)</div>
<div class="t" style="left:470.70px;top:375.11px;font-size:8.3px;letter-spacing:-0.2px;color:#e8e8e8;">S21 Polar Plot</div>
<div class="t" style="left:810.80px;top:49.71px;font-size:8px;letter-spacing:-0.1px;color:#e8e8e8;">-20</div>
<div class="t" style="left:810.80px;top:109.37px;font-size:8px;letter-spacing:-0.1px;color:#e8e8e8;">-30</div>
<div class="t" style="left:810.80px;top:169.03px;font-size:8px;letter-spacing:-0.1px;color:#e8e8e8;">-40</div>
<div class="t" style="left:810.80px;top:228.69px;font-size:8px;letter-spacing:-0.1px;color:#e8e8e8;">-50</div>
<div class="t" style="left:810.80px;top:288.35px;font-size:8px;letter-spacing:-0.1px;color:#e8e8e8;">-60</div>
<div class="t" style="left:810.80px;top:344.51px;font-size:8px;letter-spacing:-0.1px;color:#e8e8e8;">-70</div>
<div class="t" style="left:810.80px;top:389.31px;font-size:8px;letter-spacing:-0.1px;color:#e8e8e8;">-60</div>
<div class="t" style="left:810.80px;top:426.53px;font-size:8px;letter-spacing:-0.1px;color:#e8e8e8;">-65</div>
<div class="t" style="left:810.80px;top:463.76px;font-size:8px;letter-spacing:-0.1px;color:#e8e8e8;">-70</div>
<div class="t" style="left:810.80px;top:500.98px;font-size:8px;letter-spacing:-0.1px;color:#e8e8e8;">-75</div>
<div class="t" style="left:810.80px;top:538.21px;font-size:8px;letter-spacing:-0.1px;color:#e8e8e8;">-80</div>
<div class="t" style="left:810.80px;top:575.43px;font-size:8px;letter-spacing:-0.1px;color:#e8e8e8;">-85</div>
<div class="t" style="left:810.80px;top:612.66px;font-size:8px;letter-spacing:-0.1px;color:#e8e8e8;">-90</div>
<div class="t" style="left:810.80px;top:649.88px;font-size:8px;letter-spacing:-0.1px;color:#e8e8e8;">-95</div>
<div class="t" style="left:810.80px;top:685.11px;font-size:8px;letter-spacing:-0.1px;color:#e8e8e8;">-100</div>
<div class="t" style="left:728.90px;width:200px;top:356.51px;font-size:8px;letter-spacing:-0.1px;color:#e8e8e8;text-align:center;">300.0M</div>
<div class="t" style="left:728.90px;width:200px;top:696.11px;font-size:8px;letter-spacing:-0.1px;color:#e8e8e8;text-align:center;">300.0M</div>
<div class="t" style="left:813.18px;width:200px;top:356.51px;font-size:8px;letter-spacing:-0.1px;color:#e8e8e8;text-align:center;">340.0M</div>
<div class="t" style="left:813.18px;width:200px;top:696.11px;font-size:8px;letter-spacing:-0.1px;color:#e8e8e8;text-align:center;">340.0M</div>
<div class="t" style="left:897.46px;width:200px;top:356.51px;font-size:8px;letter-spacing:-0.1px;color:#e8e8e8;text-align:center;">380.0M</div>
<div class="t" style="left:897.46px;width:200px;top:696.11px;font-size:8px;letter-spacing:-0.1px;color:#e8e8e8;text-align:center;">380.0M</div>
<div class="t" style="left:981.74px;width:200px;top:356.51px;font-size:8px;letter-spacing:-0.1px;color:#e8e8e8;text-align:center;">420.0M</div>
<div class="t" style="left:981.74px;width:200px;top:696.11px;font-size:8px;letter-spacing:-0.1px;color:#e8e8e8;text-align:center;">420.0M</div>
<div class="t" style="left:1066.02px;width:200px;top:356.51px;font-size:8px;letter-spacing:-0.1px;color:#e8e8e8;text-align:center;">460.0M</div>
<div class="t" style="left:1066.02px;width:200px;top:696.11px;font-size:8px;letter-spacing:-0.1px;color:#e8e8e8;text-align:center;">460.0M</div>
<div class="t" style="left:1150.30px;width:200px;top:356.51px;font-size:8px;letter-spacing:-0.1px;color:#e8e8e8;text-align:center;">500.0M</div>
<div class="t" style="left:1150.30px;width:200px;top:696.11px;font-size:8px;letter-spacing:-0.1px;color:#e8e8e8;text-align:center;">500.0M</div>
</div></body></html>
